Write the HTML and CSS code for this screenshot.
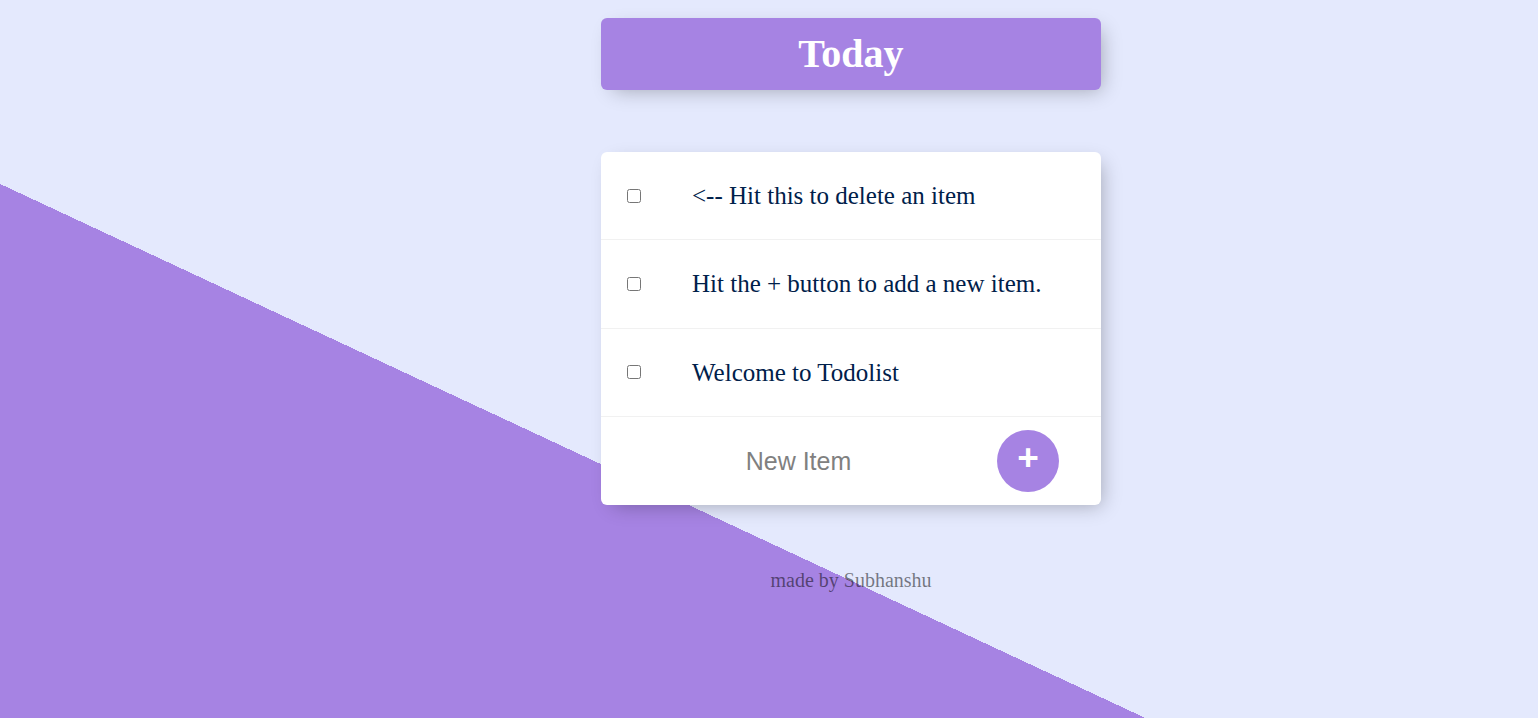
FILE: index.html
```html
<!DOCTYPE html>
<html lang="en">
<head>
<meta charset="utf-8">
<title>Todolist</title>
<link rel="stylesheet" href="styles.css">
</head>
<body>
  <div class="box heading">
    <h1 class="title">Today</h1>
  </div>
  <div class="box list">
    <div class="item">
      <input type="checkbox" class="check">
      <p class="text">&lt;-- Hit this to delete an item</p>
    </div>
    <div class="item">
      <input type="checkbox" class="check">
      <p class="text">Hit the + button to add a new item.</p>
    </div>
    <div class="item">
      <input type="checkbox" class="check">
      <p class="text">Welcome to Todolist</p>
    </div>
    <form class="item add-form">
      <input type="text" class="new-item" placeholder="New Item" autocomplete="off">
      <button type="button" class="add-btn">+</button>
    </form>
  </div>
  <footer class="footer">made by Subhanshu</footer>
</body>
</html>
```

FILE: styles.css
```css
html {
  height: 100%;
  background-color: #E4E9FD;
  background-image: linear-gradient(25deg, #A683E3 50%, #E4E9FD 50%);
  background-size: 100% 1085px;
  background-repeat: no-repeat;
  font-family: "Liberation Serif", "Times New Roman", serif;
}

body {
  margin: 0;
  padding: 18px 0 0 164px;
  overflow: hidden;
}

.box {
  width: 500px;
  margin: 0 auto;
  background: #fff;
  border-radius: 6px;
  box-shadow: 6px 6px 19px -6px rgba(0, 0, 0, 0.3);
}

.heading {
  background-color: #A683E3;
  text-align: center;
  margin-bottom: 62px;
}

.title {
  margin: 0;
  padding: 12px 0 13px;
  font-size: 40px;
  line-height: 47px;
  font-weight: bold;
  color: #fff;
}

.item {
  min-height: 88.3px;
  display: flex;
  align-items: center;
  border-bottom: 1px solid #F1F1F1;
  box-sizing: border-box;
}

.item:last-child {
  border-bottom: 0;
}

.check {
  width: 14px;
  height: 14px;
  margin: 0 51px 0 26px;
  flex: none;
}

.text {
  margin: 0;
  font-size: 25px;
  line-height: 29px;
  color: #00204a;
}

.add-form {
  margin: 0;
  padding-left: 25px;
  height: 88.3px;
}

.new-item {
  width: 345px;
  height: 75px;
  padding: 0;
  border: none;
  background: transparent;
  text-align: center;
  font-family: "Liberation Sans", Arial, sans-serif;
  font-size: 25px;
  outline: none;
  flex: none;
}

.new-item::placeholder {
  color: grey;
  opacity: 1;
}

.add-btn {
  width: 62px;
  height: 62px;
  margin-left: 26px;
  border: 0;
  border-radius: 50%;
  background-color: #A683E3;
  color: #fff;
  font-family: "Liberation Sans", Arial, sans-serif;
  font-size: 37px;
  font-weight: bold;
  line-height: 1;
  padding: 0 0 7px;
  flex: none;
}

.footer {
  margin-top: 64px;
  text-align: center;
  font-size: 20px;
  line-height: 23px;
  color: rgba(0, 0, 0, 0.5);
}
```
